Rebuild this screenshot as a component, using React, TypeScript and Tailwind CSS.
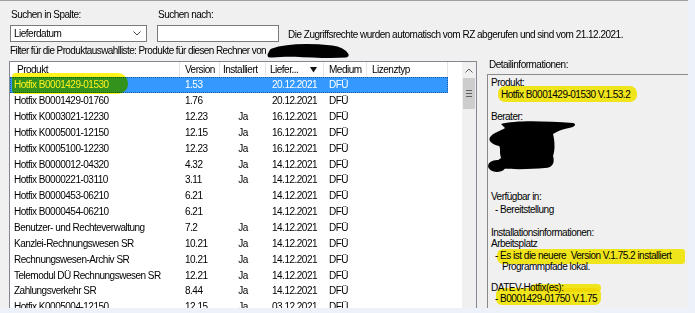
import React from "react";

type Row = [string, string, string, string, string];

const rows: Row[] = [
  ["Hotfix B0001429-01530", "1.53", "", "20.12.2021", "DFÜ"],
  ["Hotfix B0001429-01760", "1.76", "", "20.12.2021", "DFÜ"],
  ["Hotfix K0003021-12230", "12.23", "Ja", "16.12.2021", "DFÜ"],
  ["Hotfix K0005001-12150", "12.15", "Ja", "16.12.2021", "DFÜ"],
  ["Hotfix K0005100-12230", "12.23", "Ja", "16.12.2021", "DFÜ"],
  ["Hotfix B0000012-04320", "4.32", "Ja", "14.12.2021", "DFÜ"],
  ["Hotfix B0000221-03110", "3.11", "Ja", "14.12.2021", "DFÜ"],
  ["Hotfix B0000453-06210", "6.21", "", "14.12.2021", "DFÜ"],
  ["Hotfix B0000454-06210", "6.21", "", "14.12.2021", "DFÜ"],
  ["Benutzer- und Rechteverwaltung", "7.2", "Ja", "14.12.2021", "DFÜ"],
  ["Kanzlei-Rechnungswesen SR", "10.21", "Ja", "14.12.2021", "DFÜ"],
  ["Rechnungswesen-Archiv SR", "10.21", "Ja", "14.12.2021", "DFÜ"],
  ["Telemodul DÜ Rechnungswesen SR", "12.21", "Ja", "14.12.2021", "DFÜ"],
  ["Zahlungsverkehr SR", "8.44", "Ja", "14.12.2021", "DFÜ"],
  ["Hotfix K0005004-12150", "12.15", "Ja", "03.12.2021", "DFÜ"],
];

const ListHeader: React.FC = () => (
  <div className="flex h-[15px] bg-white leading-[15px] whitespace-nowrap">
    <div className="w-[170px] pl-[7px] border-r border-[#e5e5e5]">Produkt</div>
    <div className="w-[40px] pl-[5px] border-r border-[#e5e5e5]">Version</div>
    <div className="w-[46px] pl-[3px] border-r border-[#e5e5e5] overflow-hidden">Installiert</div>
    <div className="w-[58px] pl-[4px] border-r border-[#e5e5e5] flex items-center">
      <span>Liefer...</span>
      <svg className="ml-[12px]" width="7" height="6" viewBox="0 0 7 6">
        <path d="M0 0 H7 L3.5 5.5 Z" fill="#111" />
      </svg>
    </div>
    <div className="w-[43px] pl-[5px] border-r border-[#e5e5e5]">Medium</div>
    <div className="w-[81px] pl-[5px] border-r border-[#e5e5e5]">Lizenztyp</div>
  </div>
);

const ListRow: React.FC<{ row: Row; selected?: boolean }> = ({ row, selected }) => (
  <div
    className={
      "flex w-[438px] h-[15.85px] items-center whitespace-nowrap " +
      (selected ? "bg-[#3399ff] text-white outline outline-1 outline-dotted outline-[#1c5c9c] -outline-offset-1" : "")
    }
  >
    <div className="w-[170px] pl-[4px] overflow-hidden">{row[0]}</div>
    <div className="w-[40px] pl-[5px]">{row[1]}</div>
    <div className="w-[46px] text-center">{row[2]}</div>
    <div className="w-[58px] pl-[6px]">{row[3]}</div>
    <div className="w-[43px] pl-[5px]">{row[4]}</div>
  </div>
);

const Scrollbar: React.FC = () => (
  <div className="w-[14px] shrink-0 bg-[#f0f0f0] flex flex-col">
    <div className="h-[16px] flex items-center justify-center">
      <svg width="8" height="5" viewBox="0 0 8 5">
        <polyline points="0.5,4.5 4,1 7.5,4.5" fill="none" stroke="#606060" strokeWidth="1" />
      </svg>
    </div>
    <div className="h-[31px] mx-[1px] bg-[#cdcdcd] flex flex-col items-center justify-center gap-[2px]">
      <div className="w-[6px] h-px bg-[#606060]" />
      <div className="w-[6px] h-px bg-[#606060]" />
      <div className="w-[6px] h-px bg-[#606060]" />
    </div>
  </div>
);

const Marker: React.FC<{ className: string }> = ({ className }) => (
  <div className={"absolute bg-[#fff31c] mix-blend-multiply pointer-events-none " + className} />
);

const detailLines: { text: string; cls: string }[] = [
  { text: "Produkt:", cls: "mt-[1.5px]" },
  { text: "Hotfix B0001429-01530 V.1.53.2", cls: "mt-px pl-[10px]" },
  { text: "Berater:", cls: "mt-[11px]" },
  { text: "Verfügbar in:", cls: "mt-[69px]" },
  { text: "- Bereitstellung", cls: "mt-[2px] pl-[4px]" },
  { text: "Installationsinformationen:", cls: "mt-[12px]" },
  { text: "Arbeitsplatz", cls: "" },
  { text: "- Es ist die neuere\u00a0 Version V.1.75.2 installiert", cls: "mt-px pl-[4px]" },
  { text: "Programmpfade lokal.", cls: "pl-[11px]" },
  { text: "DATEV-Hotfix(es):", cls: "mt-[10px]" },
  { text: "- B0001429-01750 V.1.75", cls: "pl-[4px]" },
];

export default function App() {
  return (
    <div className="w-[695px] h-[313px] bg-[#edf2fa] overflow-hidden font-['Liberation_Sans',Arial,sans-serif] text-[10px] tracking-[-0.5px] text-black">
      <div className="relative w-[688px] h-[308px] bg-[#f0f0f0] border-t border-[#a0a0a0] overflow-hidden">
        {/* Search bar */}
        <div className="flex pl-[10px] pt-[8px]">
          <div className="w-[137px] shrink-0">
            <div className="h-[12px] leading-[12px] pl-px">Suchen in Spalte:</div>
            <div className="mt-[4px] h-[17px] bg-white border border-[#7a7a7a] flex items-center justify-between pl-[3px] pr-[5px]">
              <span>Lieferdatum</span>
              <svg width="8" height="5" viewBox="0 0 8 5">
                <polyline points="0.5,0.5 4,4 7.5,0.5" fill="none" stroke="#444" strokeWidth="1" />
              </svg>
            </div>
          </div>
          <div className="ml-[10px] w-[122px] shrink-0">
            <div className="h-[12px] leading-[12px] pl-px">Suchen nach:</div>
            <div className="mt-[4px] h-[17px] bg-white border border-[#7a7a7a]" />
          </div>
          <div className="ml-[9px] mt-[20px] h-[12px] leading-[12px] whitespace-nowrap">
            Die Zugriffsrechte wurden automatisch vom RZ abgerufen und sind vom 21.12.2021.
          </div>
        </div>

        <div className="relative pl-[10px] mt-[3px] h-[12px] leading-[12px] whitespace-nowrap tracking-[-0.6px]">
          Filter für die Produktauswahlliste: Produkte für diesen Rechner von
          <svg className="absolute left-[262px] top-[-3px]" width="90" height="20" viewBox="0 0 90 20">
            <path
              d="M10 9 C 25 4, 50 4, 70 6 C 78 7, 82 10, 84 13 C 70 14, 45 13, 30 12 C 20 12, 12 13, 8 13 Z"
              fill="#000"
              stroke="#000"
              strokeWidth="5"
              strokeLinejoin="round"
            />
          </svg>
        </div>

        {/* Main area */}
        <div className="flex mt-[2px]">
          <div className="relative shrink-0 mt-[2px] ml-[9px] w-[468px] h-[260px] border border-[#828790] bg-white flex">
            <div className="flex-1 overflow-hidden">
              <ListHeader />
              {rows.map((r, i) => (
                <ListRow key={i} row={r} selected={i === 0} />
              ))}
            </div>
            <Scrollbar />
            <Marker className="left-[2px] top-[11px] w-[116px] h-[21px] rounded-r-[10px] rounded-l-[4px]" />
          </div>

          <div className="ml-[10px] w-[215px] shrink-0">
            <div className="h-[12px] leading-[12px] pl-[2px]">Detailinformationen:</div>
            <div className="relative mt-[3px] h-[240px] border-t border-l border-[#8a8a8a] bg-[#f0f0f0] pl-[3px] leading-[11px]">
              {detailLines.map((l, i) => (
                <div key={i} className={"h-[11px] whitespace-nowrap " + l.cls}>
                  {l.text}
                </div>
              ))}
              <Marker className="left-[10px] top-[11px] w-[139px] h-[16px] rounded-[7px]" />
              <Marker className="left-[9px] top-[174px] w-[188px] h-[15px] rounded-l-[6px] rounded-r-[3px]" />
              <Marker className="left-[43px] top-[209px] w-[70px] h-[8px] rounded-[4px]" />
              <Marker className="left-[8px] top-[213px] w-[105px] h-[17px] rounded-[6px]" />
              <svg className="absolute left-[-3px] top-[43px]" width="100" height="56" viewBox="0 0 100 56">
                <path
                  d="M16 6 C 30 2, 60 3, 88 5 C 92 6, 90 9, 84 10 C 74 12, 72 14, 68 16 C 70 24, 70 32, 68 38 C 70 44, 68 50, 60 50 C 46 51, 30 52, 14 50 C 8 49, 10 44, 16 40 C 14 34, 16 30, 14 28 C 6 26, 2 22, 6 18 C 10 14, 18 12, 20 10 Z"
                  fill="#000"
                />
                <ellipse cx="12" cy="48" rx="9" ry="6" fill="#000" />
              </svg>
            </div>
          </div>
        </div>
      </div>
    </div>
  );
}
